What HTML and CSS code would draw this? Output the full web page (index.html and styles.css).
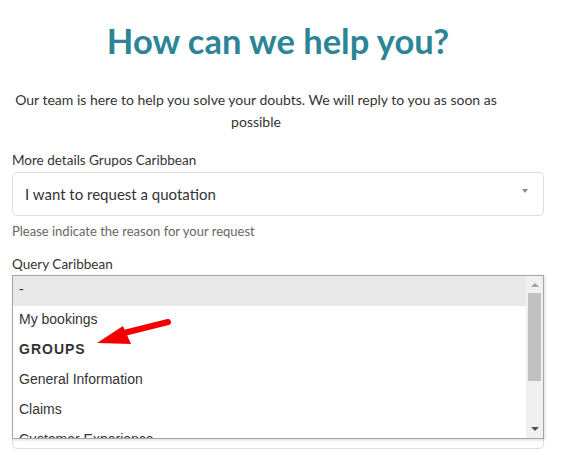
FILE: index.html
```html
<!DOCTYPE html>
<html lang="en">
<head>
    <meta charset="UTF-8">
    <meta name="viewport" content="width=device-width, initial-scale=1.0">
    <title>How can we help you?</title>
    <link rel="stylesheet" href="styles.css">
</head>
<body>
    <div class="container">
        <h1>How can we help you?</h1>
        <p class="intro">Our team is here to help you solve your doubts. We will reply to you as soon as possible</p>

        <div class="form-group">
            <label>More details Grupos Caribbean</label>
            <div class="select-box">
                <span>I want to request a quotation</span>
                <span class="caret"></span>
            </div>
            <p class="help">Please indicate the reason for your request</p>
        </div>

        <div class="form-group query">
            <label>Query Caribbean</label>
            <div class="select-box behind"></div>

            <!-- open native list -->
            <div class="listbox">
                <ul class="options">
                    <li class="active">-</li>
                    <li>My bookings</li>
                    <li class="group">GROUPS</li>
                    <li>General Information</li>
                    <li>Claims</li>
                    <li>Customer Experience</li>
                </ul>
                <div class="scrollbar">
                    <span class="arrow up"></span>
                    <span class="thumb"></span>
                    <span class="arrow down"></span>
                </div>
            </div>

            <svg class="pointer" width="85" height="35" viewBox="0 0 85 35">
                <path d="M78 7 L34 18" stroke="#f20000" stroke-width="6" stroke-linecap="round" fill="none"/>
                <path d="M7 28 L33 11 L41 29 Z" fill="#f20000"/>
            </svg>
        </div>
    </div>
</body>
</html>
```

FILE: styles.css
```css
body {
    font-family: Lato, "Open Sans", sans-serif;
    background-color: #fff;
    color: #333;
    margin: 0;
    padding: 0;
}

.container {
    padding: 20px 24px 0 12px;
}

h1 {
    margin: 0;
    font-size: 34.5px;
    font-weight: 700;
    color: #2b8596;
    text-align: center;
    line-height: 42px;
}

.intro {
    margin: 27px 44px 18px 0;
    font-size: 14px;
    line-height: 22px;
    text-align: center;
}

.form-group {
    margin-bottom: 16px;
}

label {
    display: block;
    font-size: 13.5px;
    line-height: 18px;
    margin-bottom: 3px;
}

.select-box {
    height: 42px;
    border: 1px solid #ddd;
    border-radius: 5px;
    display: flex;
    align-items: center;
    justify-content: space-between;
    padding: 0 15px 0 12px;
    font-size: 15px;
}

.caret {
    width: 0;
    height: 0;
    border-left: 3px solid transparent;
    border-right: 3px solid transparent;
    border-top: 4px solid #888;
    margin-top: -6px;
}

.help {
    margin: 7px 0 0;
    font-size: 13px;
    line-height: 16px;
    color: #666;
}

.query {
    position: relative;
}

.behind {
    height: 171px;
}

.listbox {
    position: absolute;
    left: 0;
    right: 0;
    top: 20px;
    height: 162px;
    border: 1px solid #a5a5a5;
    background: #fff;
    display: flex;
    overflow: hidden;
    box-shadow: 1px 1px 3px rgba(0, 0, 0, 0.15);
    font-family: "Liberation Sans", Arial, sans-serif;
    font-size: 14px;
    color: #333;
}

.options {
    list-style: none;
    margin: 0;
    padding: 0;
    flex: 1;
}

.options li {
    height: 30px;
    line-height: 27px;
    padding-left: 6px;
}

.options li.active {
    background: #e8e8e8;
}

.options li.group {
    font-weight: 700;
    letter-spacing: 1px;
}

.scrollbar {
    width: 17px;
    background: #f0f0f0;
    display: flex;
    flex-direction: column;
    align-items: center;
}

.arrow {
    width: 0;
    height: 0;
    border-left: 4px solid transparent;
    border-right: 4px solid transparent;
}

.arrow.up {
    border-bottom: 4px solid #a3a3a3;
    margin: 7px 0 6px;
}

.arrow.down {
    border-top: 4px solid #505050;
    margin: auto 0 7px;
}

.thumb {
    width: 13px;
    height: 88px;
    background: #c1c1c1;
}

.pointer {
    position: absolute;
    left: 78px;
    top: 60px;
}
```
